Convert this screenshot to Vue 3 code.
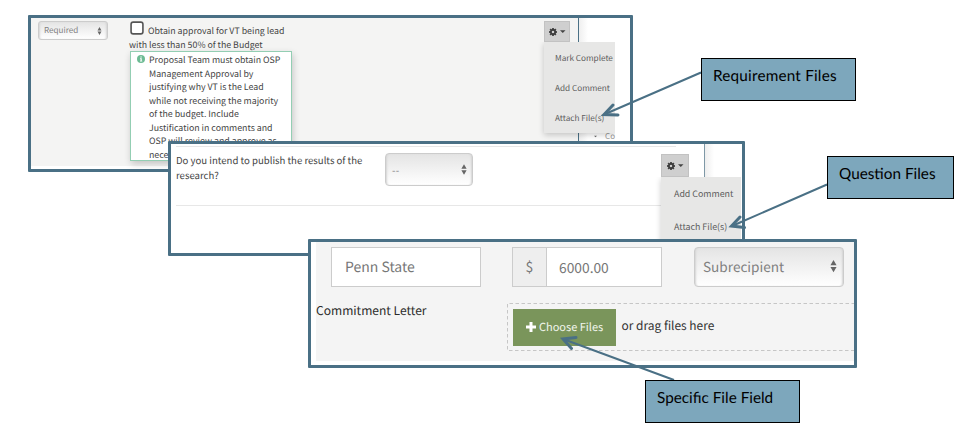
<script setup>
const tipLines = [
  'Proposal Team must obtain OSP',
  'Management Approval by',
  'justifying why VT is the Lead',
  'while not receiving the majority',
  'of the budget. Include',
  'Justification in comments and',
  'OSP will review and approve as',
  'necessary.',
]
const requirementMenu = ['Mark Complete', 'Add Comment', 'Attach File(s)']
const questionMenu = ['Add Comment', 'Attach File(s)']
const teeth = [0, 45, 90, 135]
</script>

<template>
  <main class="board">
    <section class="panel requirement">
      <div class="req-body">
        <div class="select small">
          <span>Required</span>
          <svg class="sorter" viewBox="0 0 8 14"><path d="M4 0 7.5 6H.5zM4 14 .5 8h7z" /></svg>
        </div>
        <div class="req-main">
          <p class="req-label"><svg class="checkbox" viewBox="0 0 13 13"><rect x="1" y="1" width="11" height="11" rx="2" /></svg><span class="first">Obtain approval for VT being lead</span></p>
          <p class="req-label second">with less than 50% of the Budget</p>
          <div class="tip">
            <svg class="info" viewBox="0 0 16 16"><circle cx="8" cy="8" r="8" /><path d="M6.7 3h2.8v2.2H6.7zM6 6.6h3.5v4.7h1V13H6v-1.7h1V8.2H6z" /></svg>
            <div><p v-for="line in tipLines" :key="line">{{ line }}</p></div>
          </div>
        </div>
        <div class="actions">
          <div class="gear">
            <svg class="cog" viewBox="0 0 16 16"><g><rect v-for="a in teeth" :key="a" x="6.3" y="0" width="3.4" height="16" :transform="`rotate(${a} 8 8)`" /></g><circle cx="8" cy="8" r="4.2" class="ring" /></svg>
            <svg class="caret" viewBox="0 0 6 3"><path d="M0 0h6L3 3z" /></svg>
          </div>
          <div class="menu"><span v-for="item in requirementMenu" :key="item">{{ item }}</span></div>
        </div>
      </div>
      <div class="req-side"><div class="co"><svg class="caret tiny" viewBox="0 0 6 3"><path d="M0 0h6L3 3z" /></svg><span>Co</span></div></div>
    </section>

    <section class="panel question">
      <div class="q-body">
        <div class="q-row">
          <div class="q-text"><p>Do you intend to publish the results of the</p><p>research?</p></div>
          <div class="select medium">
            <span>--</span>
            <svg class="sorter" viewBox="0 0 8 14"><path d="M4 0 7.5 6H.5zM4 14 .5 8h7z" /></svg>
          </div>
        </div>
      </div>
      <div class="q-side"></div>
      <div class="actions">
        <div class="gear">
          <svg class="cog" viewBox="0 0 16 16"><g><rect v-for="a in teeth" :key="a" x="6.3" y="0" width="3.4" height="16" :transform="`rotate(${a} 8 8)`" /></g><circle cx="8" cy="8" r="4.2" class="ring" /></svg>
          <svg class="caret" viewBox="0 0 6 3"><path d="M0 0h6L3 3z" /></svg>
        </div>
        <div class="menu"><span v-for="item in questionMenu" :key="item">{{ item }}</span></div>
      </div>
    </section>

    <section class="panel files">
      <div class="files-body">
        <div class="fields">
          <div class="input name">Penn State</div>
          <div class="input amount"><span class="addon">$</span><span class="value">6000.00</span></div>
          <div class="select large">
            <span>Subrecipient</span>
            <svg class="sorter" viewBox="0 0 8 14"><path d="M4 0 7.5 6H.5zM4 14 .5 8h7z" /></svg>
          </div>
        </div>
        <div class="upload">
          <span class="letter">Commitment Letter</span>
          <div class="drop">
            <div class="choose"><svg viewBox="0 0 10 10"><path d="M3.5 0h3v3.5H10v3H6.5V10h-3V6.5H0v-3h3.5z" /></svg><span>Choose Files</span></div>
            <span class="drag">or drag files here</span>
            <svg class="dashes" viewBox="0 0 348 50"><path d="M348 1.5H.5V48.500H348" /></svg>
          </div>
        </div>
      </div>
    </section>

    <svg class="arrows" viewBox="0 0 973 439">
      <path class="shaft" d="M701 72.5 604 114.5M827 184.500 732 226M674 380 563 339" />
      <path class="head" d="M613 105 604 114.500 618 115M740 217 731.500 226 744.500 227.500M576 337.500 563 339 571.500 348.500" />
    </svg>

    <div class="callout c-req"><span>Requirement Files</span></div>
    <div class="callout c-question"><span>Question Files</span></div>
    <div class="callout c-file"><span>Specific File Field</span></div>
  </main>
</template>

<style>
body { margin: 0; background: #fff; }
</style>

<style scoped>
* { box-sizing: border-box; }
p { margin: 0; white-space: nowrap; }
span { white-space: nowrap; }
.board {
  position: relative;
  width: 973px;
  height: 439px;
  overflow: hidden;
  background: #fff;
  font-family: "Noto Sans CJK SC", "Open Sans", sans-serif;
  text-rendering: geometricPrecision;
  color: #444;
}
.panel { position: absolute; isolation: isolate; border: 3px solid #4a7085; border-radius: 1px; background: #fff; overflow: hidden; display: flex; }
.requirement { left: 28px; top: 15px; width: 605px; height: 157px; }
.question { left: 168px; top: 141px; width: 577px; height: 115px; }
.files { left: 308px; top: 239px; width: 549px; height: 129px; }

.select {
  display: flex;
  align-items: center;
  justify-content: space-between;
  border: 1px solid #ccc;
  border-radius: 3px;
  background: linear-gradient(#e4e4e4, #fff);
  box-shadow: inset 2px 0 2px -1px #d4d4d4, inset -2px 0 2px -1px #d4d4d4;
  color: #808080;
}
.sorter { fill: #666; flex: none; }

.req-body { display: flex; width: 548px; height: 148px; padding-top: 3px; background: #f4f4f3; border-right: 1px solid #4a7085; flex: none; }
.small { width: 70px; height: 19px; margin-left: 7px; padding: 0 5px 0 5px; font-size: 8.100px; flex: none; }
.small .sorter { width: 5px; height: 8px; }
.req-main { width: 163px; margin-left: 22px; flex: none; font-size: 8.800px; }
.req-label { display: flex; height: 15px; line-height: 20px; }
.first { font-size: 8.800px; }
.req-label.second { margin-left: -1px; line-height: 17px; }
.checkbox { width: 14px; height: 14px; margin: 0 4px 0 0; fill: #fff; stroke: #555; stroke-width: 1.500px; flex: none; }
.tip { display: flex; height: 110px; width: 162px; border: 1px solid #93ceb3; background: #fff; box-shadow: 1px 3px 7px #0003; line-height: 13.5px; padding: 1px 0 0 6px; }
.info { width: 8px; height: 8px; margin: 2px 4px 0 0; fill: #6dbb94; flex: none; }
.info path { fill: #fff; }

.actions { display: flex; flex-direction: column; }
.requirement .actions { width: 71px; margin-left: 251px; flex: none; position: relative; z-index: 1; }
.gear { display: flex; align-items: center; gap: 3px; width: 26px; height: 21px; padding-left: 4px; background: #cfcfcf; border: 1px solid #c2c2c2; }
.cog { width: 8px; height: 8px; fill: #3b3b3b; }
.ring { fill: #cfcfcf; stroke: #3b3b3b; stroke-width: 3.4; }
.caret { width: 5.500px; height: 3px; fill: #444; }
.menu { display: flex; flex-direction: column; background: #e7e7e6; box-shadow: 0 2px 6px #0003; font-size: 8.200px; color: #5c5c5c; }
.requirement .menu { width: 71px; height: 91px; clip-path: inset(0 0 -10px -10px); }
.requirement .menu span { height: 30px; line-height: 33px; padding-left: 11px; }
.req-side { width: 36px; height: 148px; padding: 113px 0 0 15px; background: linear-gradient(90deg, #efefef, #fff 9px); font-size: 8px; color: #999; flex: none; }
.co { display: flex; align-items: center; gap: 8px; height: 11px; line-height: 11px; }
.caret.tiny { width: 5px; height: 3px; fill: #666; }

.q-body { width: 533px; padding: 2px 0 0 5px; flex: none; }
.q-row { display: flex; height: 60px; border-top: 1px solid #e7e7e7; border-bottom: 1px solid #e7e7e7; width: 500px; }
.q-text { width: 209px; padding-top: 6px; font-size: 9.600px; line-height: 14.500px; flex: none; }
.medium { width: 88px; height: 33px; margin-top: 6px; padding: 0 5px 0 6px; border-radius: 4px; font-size: 10px; flex: none; font-variant-ligatures: none; letter-spacing: .2px; }
.medium .sorter { width: 6px; height: 11px; }
.q-side { width: 38px; height: 33px; border-left: 1px solid #7e98a6; background: linear-gradient(90deg, #eee, #fff 9px); flex: none; }
.question .actions { position: absolute; left: 490px; top: 10px; width: 82px; }
.question .gear { width: 28px; height: 23px; padding-left: 5px; }
.question .menu { width: 80px; height: 70px; clip-path: inset(0 0 0 -10px); }
.question .menu span { height: 32.500px; line-height: 33px; padding-left: 13px; font-size: 8.850px; }

.files-body { width: 538px; height: 119px; margin-left: 5px; background: #f4f4f4; }
.fields { display: flex; padding: 5px 0 0 15px; height: 56px; font-size: 14px; color: #777; }
.input { display: flex; align-items: center; height: 40px; border: 1px solid #ccc; background: #fff; flex: none; }
.name { width: 150px; padding-left: 13px; }
.amount { width: 150px; margin-left: 31px; }
.addon { display: flex; align-items: center; justify-content: center; width: 34px; height: 38px; background: #eee; border-right: 1px solid #ccc; }
.value { padding: 0 0 1px 12px; font-size: 13.800px; }
.large { width: 150px; height: 40px; margin-left: 32px; padding: 0 6px 2px 8px; border-radius: 4px; font-size: 13.600px; flex: none; }
.large .sorter { width: 7px; height: 14px; }
.upload { display: flex; height: 60px; color: #333; }
.letter { width: 191px; font-size: 12.050px; line-height: 26px; flex: none; color: #2b2b2b; }
.drop { position: relative; display: flex; width: 347px; height: 50px; margin-top: 4px; padding: 7px 0 0 6px; }
.dashes { position: absolute; left: 0; top: 0; width: 348px; height: 50px; fill: none; stroke: #c6c6c6; stroke-dasharray: 3.500 2.500; }
.choose { display: flex; align-items: center; gap: 3px; width: 103px; height: 37px; padding: 0 0 1px 13px; background: #7a955b; color: #f3f7ee; font-size: 11px; flex: none; }
.choose svg { width: 10px; height: 10px; fill: #fff; }
.drag { margin-left: 5.500px; font-size: 11.950px; line-height: 33px; }

.arrows { position: absolute; left: 0; top: 0; width: 973px; height: 439px; fill: none; stroke: #4a7085; }
.shaft { stroke-width: 2; }
.head { stroke-width: 3; stroke-linecap: round; }
.callout { position: absolute; height: 43px; border: 1px solid #000; background: #7da7bc; color: #000; font: 15.300px/34px Lato, sans-serif; padding-left: 11px; }
.c-req { left: 701px; top: 58px; width: 155px; letter-spacing: .2px; }
.c-question { left: 827px; top: 156px; width: 127px; }
.c-file { left: 645px; top: 380px; width: 155px; }
</style>
